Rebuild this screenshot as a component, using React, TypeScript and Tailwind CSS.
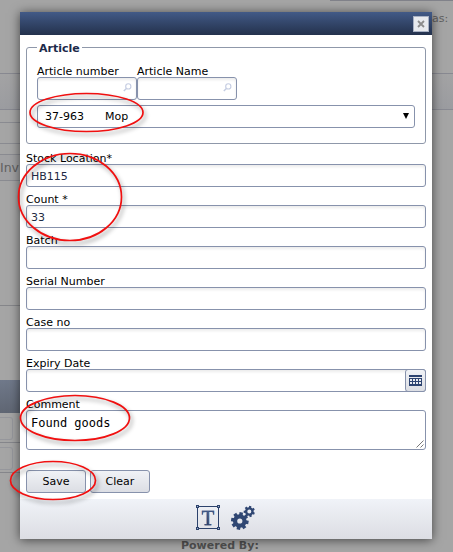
import type { ReactNode } from 'react';

type TextFieldProps = {
  label: string;
  value?: string;
  children?: ReactNode;
};

const inputClass =
  'h-[23px] w-full rounded-[3px] border border-[#8792ac] bg-white px-1 pt-px text-[11px] text-[#1f2a44] shadow-[inset_0_2px_3px_rgba(0,0,0,0.08)] outline-none';

const TextField = ({ label, value, children }: TextFieldProps) => (
  <div className="h-[41px]">
    <label className="block h-[13px] whitespace-pre leading-[15px]">{label}</label>
    <div className="relative flex">
      <input type="text" defaultValue={value} className={inputClass} />
      {children}
    </div>
  </div>
);

const SearchField = ({ label }: { label: string }) => (
  <div className="w-[100px]">
    <label className="block h-[13px] whitespace-nowrap leading-[15px]">{label}</label>
    <div className="relative">
      <input type="text" className={inputClass} />
      <svg className="absolute top-[6px] left-[86px]" width="9" height="9" viewBox="0 0 9 9" fill="none" stroke="#c5cde2">
        <circle cx="5.3" cy="3.4" r="2.6" strokeWidth="1.1" />
        <path d="M3.4 5.4L.8 8" strokeWidth="1.4" />
      </svg>
    </div>
  </div>
);

const CalendarIcon = () => (
  <svg width="13" height="11" viewBox="0 0 13 11" shapeRendering="crispEdges">
    <path d="M0 0h13v2H0zM0 3h13v8H0z" fill="#2c4370" />
    {[1, 4, 7, 10].map((x) => (
      <g key={x} fill="#e8ebf1">
        <rect x={x} y="4" width="2" height="2" />
        <rect x={x} y="7" width="2" height="2" />
      </g>
    ))}
  </svg>
);

const TextBoxIcon = () => (
  <div className="relative flex h-[25px] w-6 items-center justify-center">
    <svg className="absolute inset-0" width="24" height="25" viewBox="0 0 24 25" fill="none" stroke="#2c426c">
      <rect x="1.5" y="1.5" width="21" height="22" />
      <g fill="#a9b6cf">
        <rect x=".5" y=".5" width="2" height="2" />
        <rect x="21.5" y=".5" width="2" height="2" />
        <rect x=".5" y="22.5" width="2" height="2" />
        <rect x="21.5" y="22.5" width="2" height="2" />
      </g>
    </svg>
    <span className="bg-linear-to-b from-[#5570a0] to-[#22345a] bg-clip-text font-['Liberation_Serif',serif] text-[21px] leading-6 text-transparent [-webkit-text-stroke:0.4px_#34497a]">
      T
    </span>
  </div>
);

const Gear = ({ x, y, r, hole, teeth }: { x: number; y: number; r: number; hole: number; teeth: number }) => {
  const body = r * 0.78;
  return (
    <g transform={`translate(${x} ${y})`} fill="#304773">
      <circle r={(body + hole) / 2} fill="none" stroke="#304773" strokeWidth={body - hole} />
      {Array.from({ length: teeth }, (_, i) => (
        <rect
          key={i}
          x={-r * 0.2}
          y={-r}
          width={r * 0.4}
          height={r * 0.4}
          transform={`rotate(${(360 / teeth) * i + 10})`}
        />
      ))}
    </g>
  );
};

const GearsIcon = () => (
  <svg width="24" height="25" viewBox="0 0 24 25">
    <Gear x={8.8} y={16} r={8.8} hole={2.6} teeth={8} />
    <Gear x={18.3} y={6.5} r={5.6} hole={2} teeth={7} />
  </svg>
);

const Backdrop = () => (
  <div className="flex h-[552px] justify-between overflow-hidden text-[#606060]">
    <div className="w-5">
      <div className="h-[73px]" />
      <div className="h-[37px] border-y border-[#888991] bg-linear-to-b from-[#a3a3a4] to-[#9b9ca0]" />
      <div className="mt-3 h-[22px] border-y border-[#8a8b91]" />
      <div className="mt-[10px] h-[27px] border-y border-[#8a8b91] bg-[#a1a1a3] text-[12.5px] leading-[26px]">Inv</div>
      <div className="mt-[124px] h-px bg-[#85868a]" />
      <div className="mt-[74px] h-[33px] bg-linear-to-b from-[#70798a] to-[#5f6673]" />
      {[0, 1].map((row) => (
        <div key={row} className="h-[30px] border-b border-[#85868b] pt-1">
          <div className="h-[23px] w-[13px] rounded-r-[3px] border border-l-0 border-[#96979c]" />
        </div>
      ))}
    </div>
    <div className="flex-1 pt-[539px] pl-[161px] text-[11px] leading-[14px] font-bold whitespace-nowrap text-[#515151]">
      Powered By:
    </div>
    <div className="w-[21px]">
      <div className="-ml-[102px] h-px bg-[#81828a]" />
      <div className="mt-[10px] h-4 text-[11px] leading-4">as:</div>
      <div className="mt-[46px] h-[37px] border-y border-[#888991] bg-linear-to-b from-[#a3a3a4] to-[#9b9ca0]" />
    </div>
  </div>
);

// Red marker rings around the fields that have to be filled in
const rings = [
  { cx: 86.5, cy: 112.5, rx: 56.5, ry: 19 },
  { cx: 70, cy: 197, rx: 51.5, ry: 43.5 },
  { cx: 75, cy: 418, rx: 54.5, ry: 22.5 },
  { cx: 53, cy: 480.5, rx: 42.5, ry: 19 },
];

const Rings = () => (
  <svg className="pointer-events-none absolute inset-0 drop-shadow-[2px_3px_2px_rgba(0,0,0,0.4)]" width="453" height="552" fill="none" stroke="#f01010" strokeWidth="1.7">
    {rings.map((ring) => (
      <ellipse key={ring.cy} {...ring} />
    ))}
  </svg>
);

const buttonClass =
  'h-[23px] w-[60px] rounded-[3px] border border-[#8792ac] bg-linear-to-b from-[#f0f2f6] to-[#dcdee4] pt-[2px] text-[11px]';

const App = () => {
  return (
    <div className="relative h-[552px] w-[453px] overflow-hidden bg-[#a5a5a5] font-['DejaVu_Sans',Verdana,sans-serif] text-[11px] text-black">
      <Backdrop />

      <div className="absolute top-3 left-5 flex h-[527px] w-[412px] flex-col bg-white shadow-[0_1px_10px_rgba(0,0,0,0.6)]">
        <header className="flex h-[23px] items-center justify-end bg-linear-to-b from-[#425a87] to-[#24324d] pr-[3px]">
          <button className="flex size-4 items-center justify-center border border-[#a7b0c3] bg-[#e8eaee]">
            <svg width="8" height="8" viewBox="0 0 8 8" stroke="#8c8c8c" strokeWidth="1.8">
              <path d="M1 1l6 6M7 1L1 7" />
            </svg>
          </button>
        </header>

        <div className="flex-1 px-[6px] pt-[12px]">
          <div className="h-[97px] rounded-[3px] border border-[#8f98aa] px-[10px]">
            <div className="-mt-[7px] h-[14px] w-[45px] bg-white pl-[2px] text-[11px] leading-4 font-bold text-[#1c2a4a]">
              Article
            </div>
            <div className="mt-[9px] flex">
              <SearchField label="Article number" />
              <SearchField label="Article Name" />
            </div>
            <div className="mt-[5px] flex h-[23px] w-[378px] items-center rounded-[3px] border border-[#8792ac] pr-[5px] pl-[7px]">
              <span className="w-[60px] pt-[2px]">37-963</span>
              <span className="flex-1 pt-[2px]">Mop</span>
              <svg className="-mt-px" width="6" height="6" viewBox="0 0 6 6">
                <path d="M0 0h6L3 6z" />
              </svg>
            </div>
          </div>

          <div className="mt-[7px]">
            <TextField label="Stock Location*" value="HB115" />
            <TextField label="Count *" value="33" />
            <TextField label="Batch" />
            <TextField label="Serial Number" />
            <TextField label="Case no" />
            <TextField label="Expiry Date">
              <button className="absolute top-0 right-0 flex h-[23px] w-[21px] items-center justify-center rounded-[3px] border border-[#8792ac] bg-linear-to-b from-[#f0f2f6] to-[#dcdee4]">
                <CalendarIcon />
              </button>
            </TextField>
            <label className="block h-[13px] leading-[15px]">Comment</label>
            <div className="relative h-10 rounded-[3px] border border-[#8792ac] px-1 pt-[5px] font-['DejaVu_Sans_Mono',monospace] text-[12px] leading-[15px]">
              Found goods
              <svg className="absolute right-[1px] bottom-[1px]" width="8" height="8" viewBox="0 0 8 8" stroke="#555" strokeWidth=".8">
                <path d="M.5 7.5l7-7M4.5 7.5l3-3" />
              </svg>
            </div>
          </div>

          <div className="mt-5 flex gap-1">
            <button className={buttonClass}>Save</button>
            <button className={buttonClass}>Clear</button>
          </div>
        </div>

        <footer className="flex h-10 items-start justify-center gap-[11px] bg-linear-to-b from-[#f0f3f8] to-[#dcdde3] pt-[6px] pr-px">
          <TextBoxIcon />
          <GearsIcon />
        </footer>
      </div>

      <Rings />
    </div>
  );
};

export default App;
